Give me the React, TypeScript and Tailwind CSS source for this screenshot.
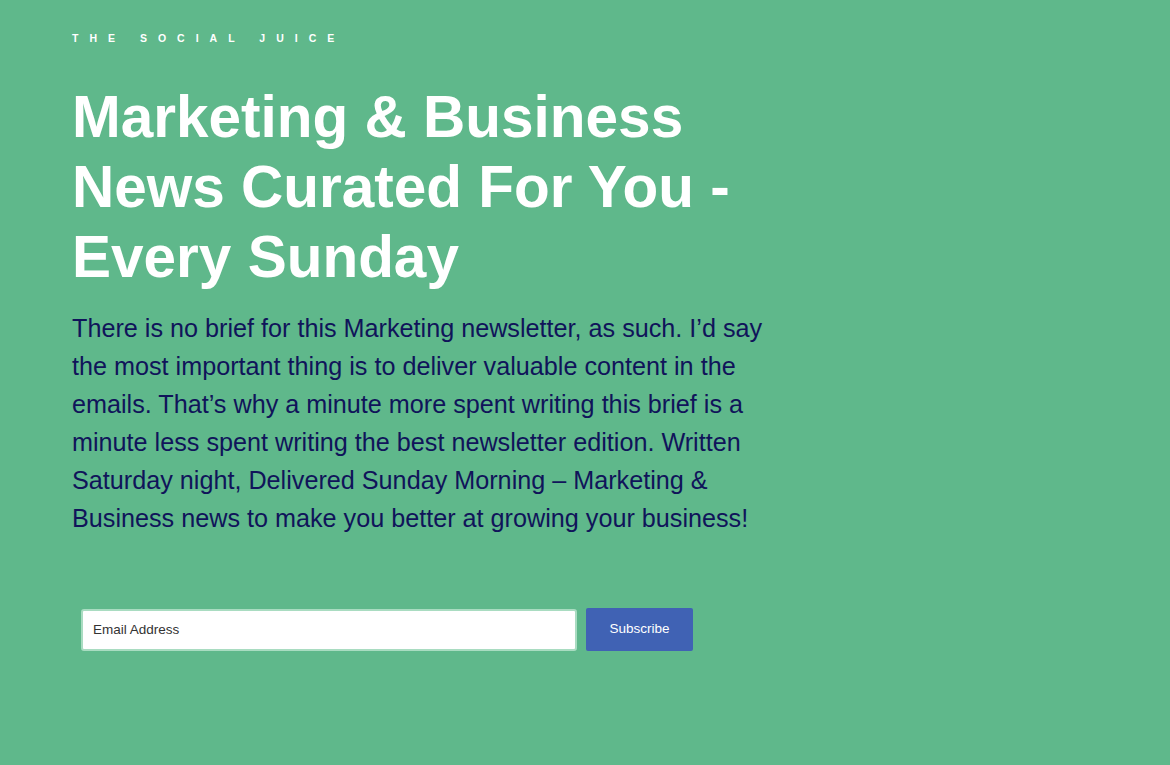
export default function App() {
  return (
    <div className="min-h-[765px] w-full bg-[#5fb88b] font-['Liberation_Sans',Arial,sans-serif]">
      <div className="pl-[72px] pt-[32px]">
        <div className="text-[10.5px] font-bold uppercase leading-[12px] tracking-[11px] text-white">
          The Social Juice
        </div>
        <h1 className="mt-[38px] w-[700px] text-[58.5px] font-bold leading-[70px] text-white">
          Marketing &amp; Business News Curated For You - Every Sunday
        </h1>
        <p className="mt-[17px] w-[700px] text-[25.2px] leading-[38px] text-[#10145a]">
          There is no brief for this Marketing newsletter, as such. I’d say the most important thing is to deliver valuable content in the emails. That’s why a minute more spent writing this brief is a minute less spent writing the best newsletter edition. Written Saturday night, Delivered Sunday Morning – Marketing &amp; Business news to make you better at growing your business!
        </p>
        <form
          className="ml-[9px] mt-[71px] flex items-center gap-[9px]"
          onSubmit={(e) => e.preventDefault()}
        >
          <input
            type="email"
            placeholder="Email Address"
            className="h-[42px] w-[496px] rounded-[3px] border-2 border-[#a9dcc1] bg-white px-[10px] text-[13.5px] text-[#333] placeholder:text-[#333] outline-none"
          />
          <button
            type="submit"
            className="h-[43px] w-[107px] rounded-[2px] bg-[#4062b4] text-[13.5px] text-white"
          >
            Subscribe
          </button>
        </form>
      </div>
    </div>
  );
}
